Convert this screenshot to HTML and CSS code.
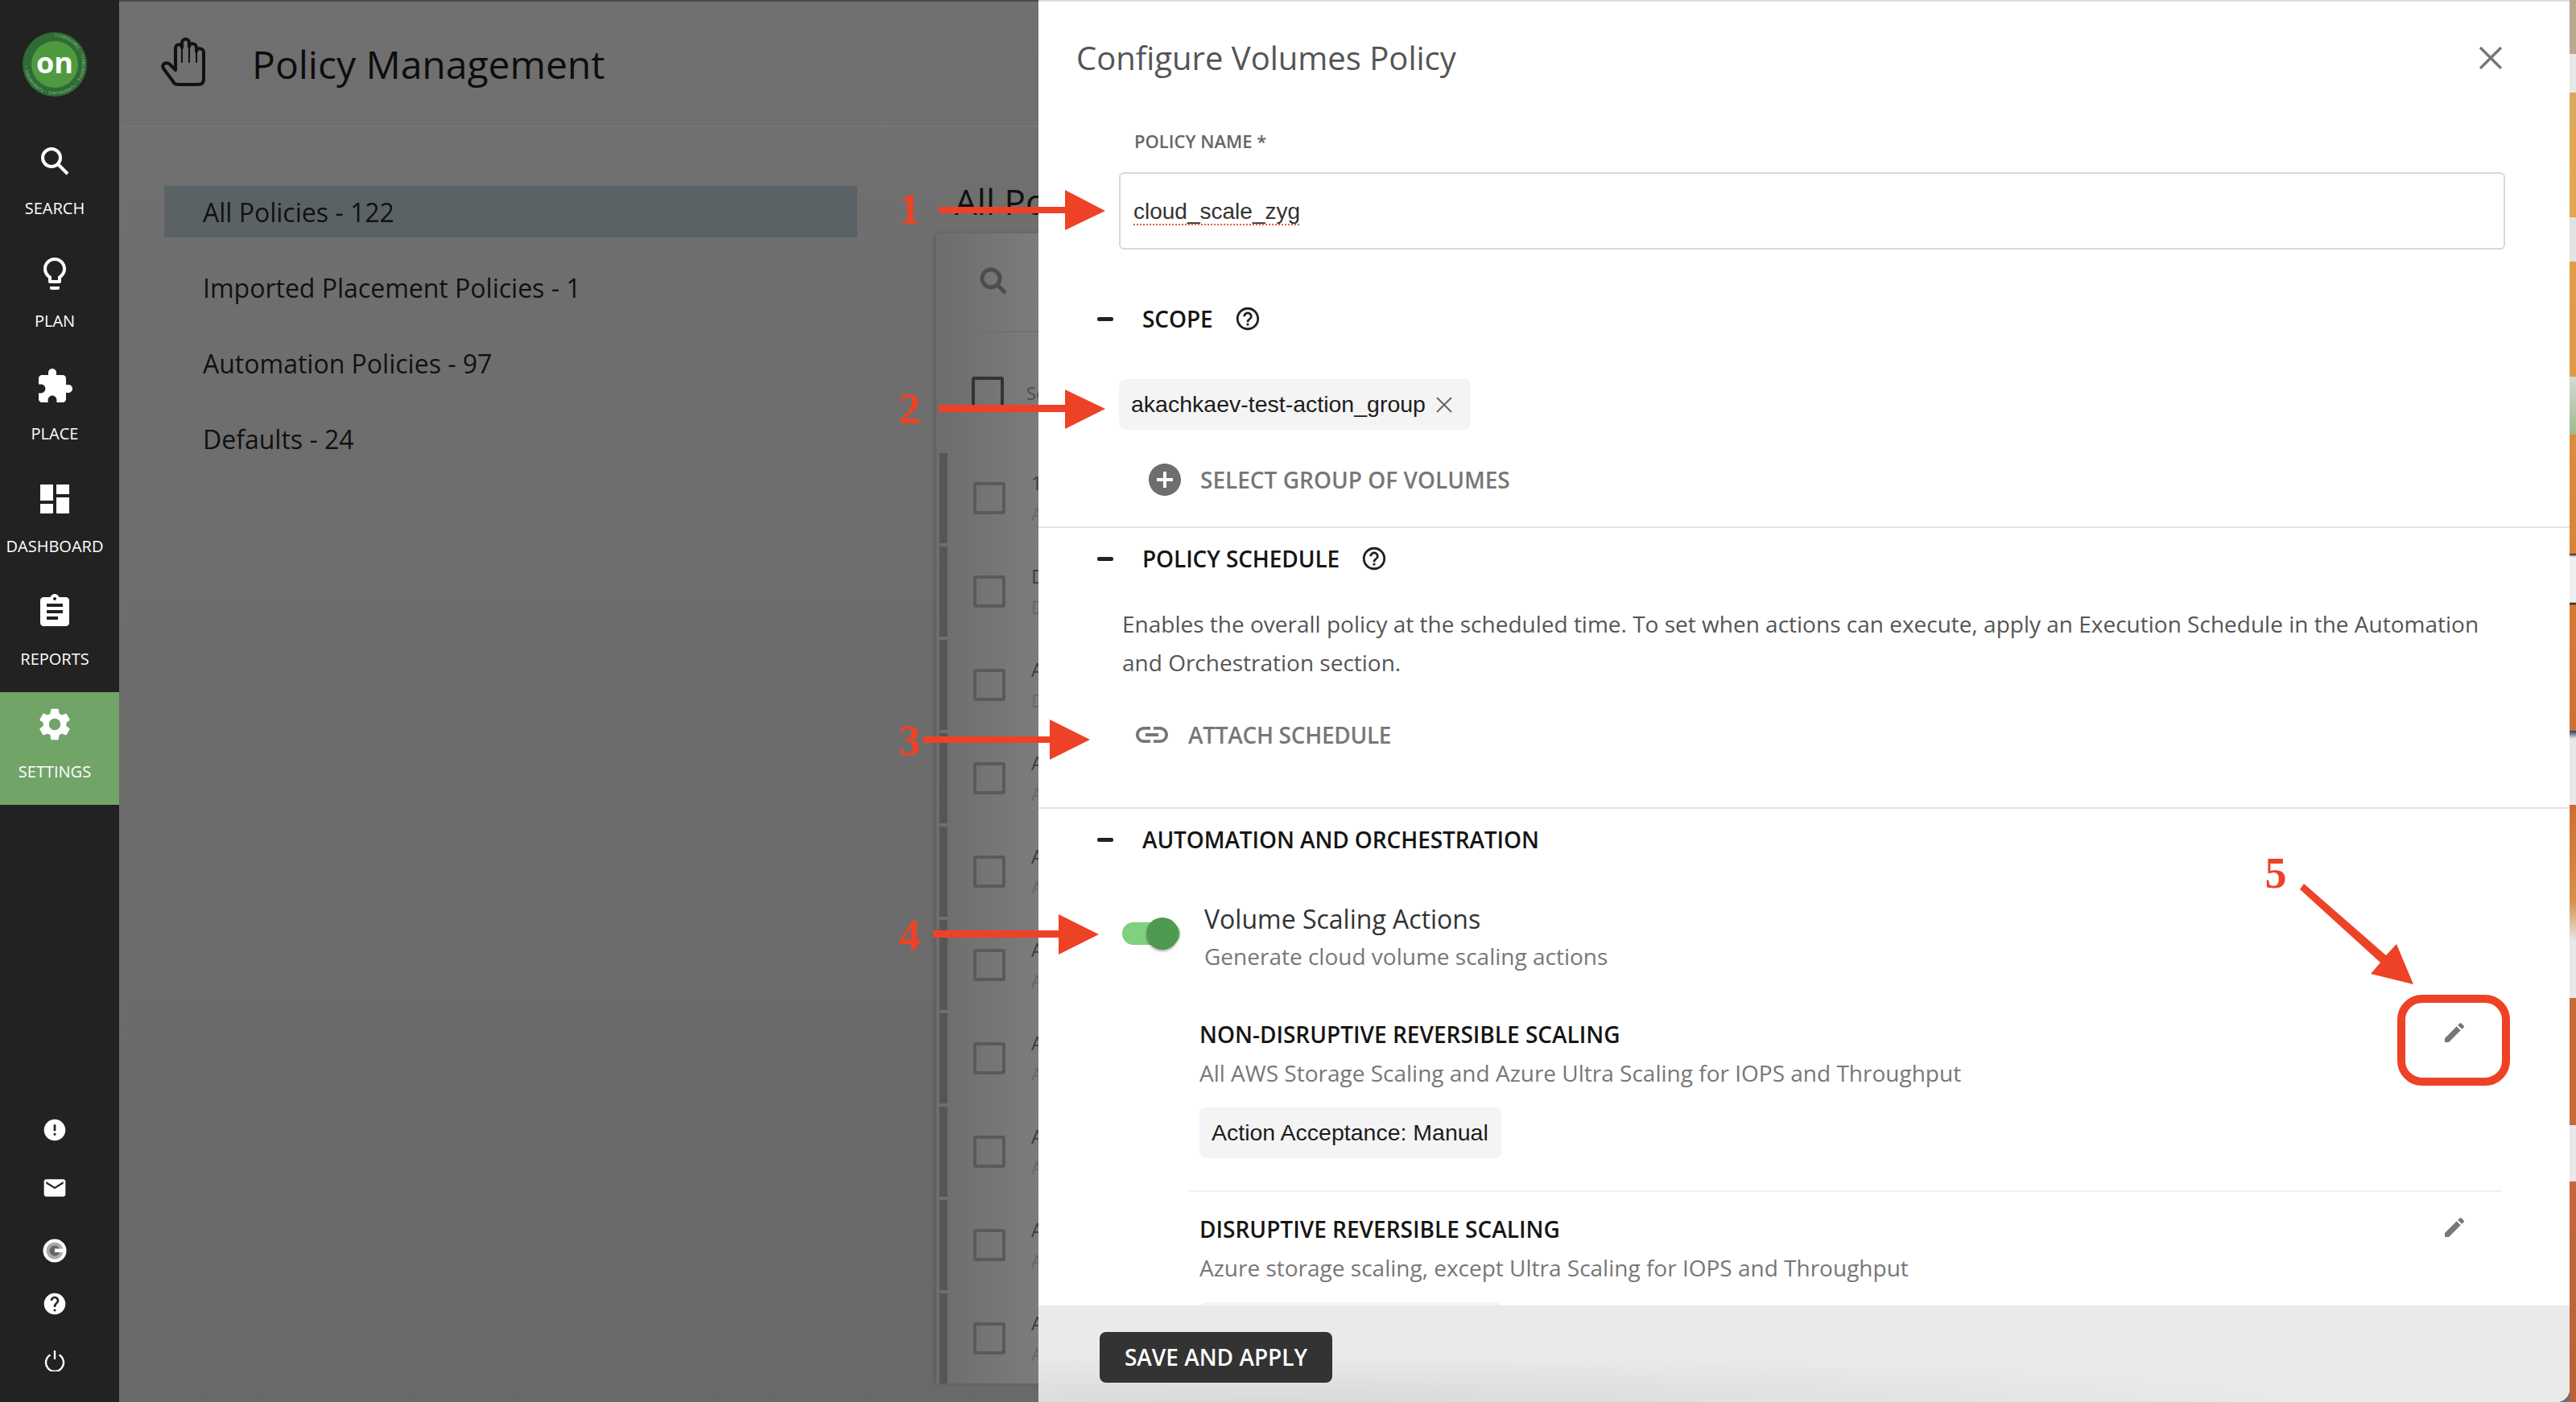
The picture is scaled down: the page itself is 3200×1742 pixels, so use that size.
FILE: index.html
```html
<!DOCTYPE html>
<html lang="en">
<head>
  <meta charset="UTF-8" />
  <title>Policy Management</title>
  <link rel="stylesheet" href="styles.css">
</head>
<body>
  <div class="app">

    <nav class="sidebar">
      <div class="logo">
        <svg viewBox="0 0 80 80" width="80" height="80">
          <defs><path id="ring" d="M40 6a34 34 0 1 1 -0.01 0"/></defs>
          <circle cx="40" cy="40" r="40" fill="#2f6b35"/>
          <circle cx="40" cy="40" r="29" fill="#4f9a3f"/>
          <text class="logo-ring"><textPath href="#ring">TURBONOMIC • TURBONOMIC • TURBONOMIC • TURBONOMIC •</textPath></text>
          <text class="logo-on" x="40" y="51" text-anchor="middle">on</text>
        </svg>
      </div>
      <a class="nav-item">
        <svg viewBox="0 0 36 36" width="36" height="36" fill="none" stroke="#fff"><circle cx="14" cy="14" r="11" stroke-width="4"/><path d="M22 22l12 12" stroke-width="4"/></svg>
        <span>SEARCH</span>
      </a>
      <a class="nav-item">
        <svg viewBox="0 0 24 24" width="48" height="48" fill="#fff"><path d="M9 21c0 .55.45 1 1 1h4c.55 0 1-.45 1-1v-1H9v1zm3-19C8.14 2 5 5.14 5 9c0 2.38 1.19 4.47 3 5.74V17c0 .55.45 1 1 1h6c.55 0 1-.45 1-1v-2.26c1.81-1.27 3-3.36 3-5.74 0-3.86-3.14-7-7-7zm2.85 11.1l-.85.6V16h-4v-2.3l-.85-.6C7.8 12.16 7 10.63 7 9c0-2.76 2.24-5 5-5s5 2.24 5 5c0 1.63-.8 3.16-2.15 4.1z"/></svg>
        <span>PLAN</span>
      </a>
      <a class="nav-item">
        <svg viewBox="0 0 24 24" width="48" height="48" fill="#fff"><path d="M20.5 11H19V7c0-1.1-.9-2-2-2h-4V3.5C13 2.12 11.88 1 10.5 1S8 2.12 8 3.5V5H4c-1.1 0-1.99.9-1.99 2v3.8H3.5c1.49 0 2.7 1.21 2.7 2.7s-1.21 2.7-2.7 2.7H2V20c0 1.1.9 2 2 2h3.8v-1.5c0-1.49 1.21-2.7 2.7-2.7 1.49 0 2.7 1.21 2.7 2.7V22H17c1.1 0 2-.9 2-2v-4h1.5c1.38 0 2.5-1.12 2.5-2.5S21.88 11 20.5 11z"/></svg>
        <span>PLACE</span>
      </a>
      <a class="nav-item">
        <svg viewBox="0 0 24 24" width="48" height="48" fill="#fff"><path d="M3 13h8V3H3v10zm0 8h8v-6H3v6zm10 0h8V11h-8v10zm0-18v6h8V3h-8z"/></svg>
        <span>DASHBOARD</span>
      </a>
      <a class="nav-item">
        <svg viewBox="0 0 24 24" width="48" height="48" fill="#fff"><path d="M19 3h-4.18C14.4 1.84 13.3 1 12 1c-1.3 0-2.4.84-2.82 2H5c-1.1 0-2 .9-2 2v14c0 1.1.9 2 2 2h14c1.1 0 2-.9 2-2V5c0-1.1-.9-2-2-2zm-7 0c.55 0 1 .45 1 1s-.45 1-1 1-1-.45-1-1 .45-1 1-1zm2 14H7v-2h7v2zm3-4H7v-2h10v2zm0-4H7V7h10v2z"/></svg>
        <span>REPORTS</span>
      </a>
      <a class="nav-item active">
        <svg viewBox="0 0 24 24" width="48" height="48" fill="#fff"><path d="M19.14 12.94c.04-.3.06-.61.06-.94 0-.32-.02-.64-.07-.94l2.03-1.58a.49.49 0 0 0 .12-.61l-1.92-3.32a.488.488 0 0 0-.59-.22l-2.39.96c-.5-.38-1.03-.7-1.62-.94l-.36-2.54a.484.484 0 0 0-.48-.41h-3.84c-.24 0-.43.17-.47.41l-.36 2.54c-.59.24-1.13.57-1.62.94l-2.39-.96c-.22-.08-.47 0-.59.22L2.74 8.87c-.12.21-.08.47.12.61l2.03 1.58c-.05.3-.09.63-.09.94s.02.64.07.94l-2.03 1.58a.49.49 0 0 0-.12.61l1.92 3.32c.12.22.37.29.59.22l2.39-.96c.5.38 1.03.7 1.62.94l.36 2.54c.05.24.24.41.48.41h3.84c.24 0 .44-.17.47-.41l.36-2.54c.59-.24 1.13-.56 1.62-.94l2.39.96c.22.08.47 0 .59-.22l1.92-3.32c.12-.22.07-.47-.12-.61l-2.01-1.58zM12 15.6c-1.98 0-3.6-1.62-3.6-3.6s1.62-3.6 3.6-3.6 3.6 1.62 3.6 3.6-1.62 3.6-3.6 3.6z"/></svg>
        <span>SETTINGS</span>
      </a>
      <div class="nav-bottom">
        <svg class="alert-icon" viewBox="0 0 24 24" width="32" height="32" fill="#fff"><path d="M12 2C6.48 2 2 6.48 2 12s4.48 10 10 10 10-4.48 10-10S17.52 2 12 2zm1 15h-2v-2h2v2zm0-4h-2V7h2v6z"/></svg>
        <svg class="mail-icon" viewBox="0 0 24 24" width="32" height="32" fill="#fff"><path d="M20 4H4c-1.1 0-2 .9-2 2v12c0 1.1.9 2 2 2h16c1.1 0 2-.9 2-2V6c0-1.1-.9-2-2-2zm0 4l-8 5-8-5V6l8 5 8-5v2z"/></svg>
        <svg class="g-icon" viewBox="0 0 30 30" width="30" height="30"><circle cx="15" cy="15" r="14.5" fill="#fff"/><circle cx="15" cy="15" r="10.5" fill="#aaa"/><circle cx="15" cy="15" r="6.5" fill="#666"/><path d="M15 12.5h14v4.5h-14z" fill="#fff"/></svg>
        <svg class="help-icon" viewBox="0 0 24 24" width="32" height="32" fill="#fff"><path d="M12 2C6.48 2 2 6.48 2 12s4.48 10 10 10 10-4.48 10-10S17.52 2 12 2zm1 17h-2v-2h2v2zm2.07-7.75l-.9.92C13.45 12.9 13 13.5 13 15h-2v-.5c0-1.1.45-2.1 1.17-2.83l1.24-1.26c.37-.36.59-.86.59-1.41 0-1.1-.9-2-2-2s-2 .9-2 2H8c0-2.21 1.79-4 4-4s4 1.79 4 4c0 .88-.36 1.68-.93 2.25z"/></svg>
        <svg class="power-icon" viewBox="0 0 26 26" width="26" height="26" fill="none" stroke="#fff" stroke-width="2.4"><path d="M7.5 5.5a11 11 0 1 0 11 0"/><path d="M13 0v11"/></svg>
      </div>
    </nav>

    <main class="main">
      <header class="main-header">
        <svg class="hand-icon" viewBox="0 0 60 64" width="60" height="64" fill="none" stroke="#111" stroke-width="4" stroke-linejoin="round"><path d="M17 58L3 39c-3-5 3-9 8-5l7 7V14c0-6 8-6 8-1V7c0-6 9-6 9 0v5c0-5 9-5 9 1v5c0-5 9-5 9 1v33c0 5-2 7-7 7H22c-2 0-4-.5-5-1z"/><path d="M26 13v19M35 12v20M44 18v14" stroke-width="2"/></svg>
        <h1>Policy Management</h1>
      </header>
      <div class="main-body">
        <ul class="policy-nav">
          <li class="selected">All Policies - 122</li>
          <li>Imported Placement Policies - 1</li>
          <li>Automation Policies - 97</li>
          <li>Defaults - 24</li>
        </ul>
        <section class="policies">
          <h2>All Policies</h2>
          <div class="card">
            <div class="card-search">
              <svg viewBox="0 0 36 36" width="36" height="36" fill="none" stroke="#4d4d4d" stroke-width="5"><circle cx="15" cy="15" r="11"/><path d="M23 23l10 10"/></svg>
            </div>
            <div class="card-head"><span class="check head-check"></span><span class="head-label">Select</span></div>
            <div class="row"><span class="bar"></span><span class="check"></span><div class="row-text"><b>100</b><i>AWS</i></div></div>
            <div class="row"><span class="bar"></span><span class="check"></span><div class="row-text"><b>Default</b><i>Default</i></div></div>
            <div class="row"><span class="bar"></span><span class="check"></span><div class="row-text"><b>AWS</b><i>Default</i></div></div>
            <div class="row"><span class="bar"></span><span class="check"></span><div class="row-text"><b>AWS</b><i>AWS</i></div></div>
            <div class="row"><span class="bar"></span><span class="check"></span><div class="row-text"><b>AWS</b><i>AWS</i></div></div>
            <div class="row"><span class="bar"></span><span class="check"></span><div class="row-text"><b>AWS</b><i>AWS</i></div></div>
            <div class="row"><span class="bar"></span><span class="check"></span><div class="row-text"><b>AWS</b><i>AWS</i></div></div>
            <div class="row"><span class="bar"></span><span class="check"></span><div class="row-text"><b>AWS</b><i>AWS</i></div></div>
            <div class="row"><span class="bar"></span><span class="check"></span><div class="row-text"><b>AWS</b><i>AWS</i></div></div>
            <div class="row"><span class="bar"></span><span class="check"></span><div class="row-text"><b>AWS</b><i>AWS</i></div></div>
          </div>
        </section>
      </div>
    </main>

    <aside class="panel">
      <div class="panel-head">
        <h2>Configure Volumes Policy</h2>
        <svg viewBox="0 0 28 28" width="28" height="28" stroke="#777" stroke-width="3.4"><path d="M1 1l26 26M27 1L1 27"/></svg>
      </div>
      <div class="panel-body">
        <div class="field">
          <label>POLICY NAME *</label>
          <div class="input"><span class="misspelled">cloud_scale_zyg</span></div>
        </div>

        <section class="block scope">
          <div class="block-head">
            <span class="dash"></span><h3>SCOPE</h3>
            <svg viewBox="0 0 24 24" width="34" height="34" fill="#222"><path d="M11 18h2v-2h-2v2zm1-16C6.48 2 2 6.48 2 12s4.48 10 10 10 10-4.48 10-10S17.52 2 12 2zm0 18c-4.41 0-8-3.59-8-8s3.59-8 8-8 8 3.59 8 8-3.59 8-8 8zm0-14c-2.21 0-4 1.79-4 4h2c0-1.1.9-2 2-2s2 .9 2 2c0 2-3 1.75-3 5h2c0-2.25 3-2.5 3-5 0-2.21-1.79-4-4-4z"/></svg>
          </div>
          <div class="chip scope-chip">akachkaev-test-action_group
            <svg viewBox="0 0 20 20" width="20" height="20" stroke="#666" stroke-width="2"><path d="M1 1l18 18M19 1L1 19"/></svg>
          </div>
          <div class="link-action select-group">
            <svg viewBox="0 0 24 24" width="48" height="48" fill="#6e6e6e"><path d="M12 2C6.48 2 2 6.48 2 12s4.48 10 10 10 10-4.48 10-10S17.52 2 12 2zm5 11h-4v4h-2v-4H7v-2h4V7h2v4h4v2z"/></svg>
            <span>SELECT GROUP OF VOLUMES</span>
          </div>
        </section>

        <section class="block schedule">
          <div class="block-head">
            <span class="dash"></span><h3>POLICY SCHEDULE</h3>
            <svg viewBox="0 0 24 24" width="34" height="34" fill="#222"><path d="M11 18h2v-2h-2v2zm1-16C6.48 2 2 6.48 2 12s4.48 10 10 10 10-4.48 10-10S17.52 2 12 2zm0 18c-4.41 0-8-3.59-8-8s3.59-8 8-8 8 3.59 8 8-3.59 8-8 8zm0-14c-2.21 0-4 1.79-4 4h2c0-1.1.9-2 2-2s2 .9 2 2c0 2-3 1.75-3 5h2c0-2.25 3-2.5 3-5 0-2.21-1.79-4-4-4z"/></svg>
          </div>
          <p class="desc">Enables the overall policy at the scheduled time. To set when actions can execute, apply an Execution Schedule in the Automation and Orchestration section.</p>
          <div class="link-action attach">
            <svg viewBox="0 0 24 24" width="48" height="48" fill="#777"><path d="M3.9 12c0-1.71 1.39-3.1 3.1-3.1h4V7H7c-2.76 0-5 2.24-5 5s2.24 5 5 5h4v-1.9H7c-1.71 0-3.1-1.39-3.1-3.1zM8 13h8v-2H8v2zm9-6h-4v1.9h4c1.71 0 3.1 1.39 3.1 3.1s-1.39 3.1-3.1 3.1h-4V17h4c2.76 0 5-2.24 5-5s-2.24-5-5-5z"/></svg>
            <span>ATTACH SCHEDULE</span>
          </div>
        </section>

        <section class="block automation">
          <div class="block-head">
            <span class="dash"></span><h3>AUTOMATION AND ORCHESTRATION</h3>
          </div>
          <div class="toggle-row">
            <span class="toggle"><span class="knob"></span></span>
            <div>
              <div class="toggle-title">Volume Scaling Actions</div>
              <div class="toggle-sub">Generate cloud volume scaling actions</div>
            </div>
          </div>
          <div class="scaling first">
            <div class="scaling-text">
              <h4>NON-DISRUPTIVE REVERSIBLE SCALING</h4>
              <p>All AWS Storage Scaling and Azure Ultra Scaling for IOPS and Throughput</p>
              <div class="chip">Action Acceptance: Manual</div>
            </div>
            <svg class="edit" viewBox="0 0 24 24" width="32" height="32" fill="#777"><path d="M3 17.25V21h3.75L17.81 9.94l-3.75-3.75L3 17.25zM20.71 7.04c.39-.39.39-1.02 0-1.41l-2.34-2.34a.996.996 0 0 0-1.41 0l-1.83 1.83 3.75 3.75 1.83-1.83z"/></svg>
          </div>
          <div class="scaling">
            <div class="scaling-text">
              <h4>DISRUPTIVE REVERSIBLE SCALING</h4>
              <p>Azure storage scaling, except Ultra Scaling for IOPS and Throughput</p>
              <div class="chip">Action Acceptance: Manual</div>
            </div>
            <svg class="edit" viewBox="0 0 24 24" width="32" height="32" fill="#777"><path d="M3 17.25V21h3.75L17.81 9.94l-3.75-3.75L3 17.25zM20.71 7.04c.39-.39.39-1.02 0-1.41l-2.34-2.34a.996.996 0 0 0-1.41 0l-1.83 1.83 3.75 3.75 1.83-1.83z"/></svg>
          </div>
        </section>
      </div>
      <footer class="panel-foot">
        <button>SAVE AND APPLY</button>
      </footer>
    </aside>

    <div class="desktop-strip"></div>
  </div>

  <!-- callouts drawn on top of the screenshot -->
  <svg class="callouts" viewBox="0 0 3200 1742" width="3200" height="1742">
    <g fill="#ee4226">
      <path d="M1166 257h157v-21l50 26-50 24v-21h-157z"/>
      <path d="M1166 503h157v-19l50 24-50 25v-21h-157z"/>
      <path d="M1147 915h157v-21l50 25-50 25v-21h-157z"/>
      <path d="M1159 1156h156v-20l50 25-50 25v-21h-156z"/>
      <path d="M2857 1105l5-7 102 89 13-14 21 50-53-13 12-14z"/>
      <text class="callout-num" x="1130" y="278">1</text>
      <text class="callout-num" x="1130" y="526">2</text>
      <text class="callout-num" x="1130" y="938">3</text>
      <text class="callout-num" x="1130" y="1180">4</text>
      <text class="callout-num" x="2827" y="1103">5</text>
    </g>
    <rect x="2983" y="1241" width="130" height="103" rx="26" fill="none" stroke="#ee4226" stroke-width="10"/>
  </svg>
</body>
</html>
```

FILE: styles.css
```css
* {
  box-sizing: border-box;
}
body {
  margin: 0;
  font-family: "Open Sans", sans-serif;
  background: #6e6e6e;
  overflow: hidden;
}
h1, h2, h3, h4, p, ul {
  margin: 0;
  padding: 0;
  font-weight: normal;
}
.app {
  display: flex;
  width: 3200px;
  height: 1742px;
}

/* left nav */
.sidebar {
  flex: none;
  width: 148px;
  background: #222;
  color: #fff;
  display: flex;
  flex-direction: column;
}
.logo {
  height: 160px;
  padding: 40px 0 0 28px;
}
.logo-ring {
  font-size: 4.6px;
  fill: #a5cfa0;
  letter-spacing: 0.4px;
}
.logo-on {
  font-size: 36px;
  font-weight: 700;
  fill: #fff;
}
.nav-item {
  height: 140px;
  padding-right: 12px;
  display: flex;
  flex-direction: column;
  align-items: center;
  font-size: 20px;
  line-height: 28px;
}
.nav-item svg {
  margin-top: 16px;
  height: 48px;
}
.nav-item span {
  margin-top: 21px;
}
.nav-item:first-of-type svg {
  margin-top: 22px;
  height: 36px;
}
.nav-item:first-of-type span {
  margin-top: 27px;
}
.nav-item.active {
  background: #71a568;
}
.nav-bottom {
  margin-top: 388px;
  padding-right: 12px;
  display: flex;
  flex-direction: column;
  align-items: center;
}
.mail-icon {
  margin-top: 40px;
}
.g-icon {
  margin-top: 47px;
}
.help-icon {
  margin-top: 35px;
}
.power-icon {
  margin-top: 42px;
}

/* page behind the panel */
.main {
  flex: none;
  width: 1142px;
  overflow: hidden;
  background: linear-gradient(#707070, #696969);
  border-top: 2px solid #4a4a4a;
}
.main-header {
  height: 156px;
  margin-left: 4px;
  padding-left: 48px;
  display: flex;
  align-items: center;
  border-bottom: 2px solid #777;
}
.hand-icon {
  margin-top: -2px;
}
.main-header h1 {
  margin-left: 53px;
  margin-top: 1px;
  font-size: 48px;
  color: #0d0d0d;
}
.main-body {
  display: flex;
  padding: 73px 0 0 56px;
}
.policy-nav {
  flex: none;
  width: 861px;
  list-style: none;
  font-size: 32px;
  color: #111;
}
.policy-nav li {
  height: 64px;
  line-height: 66px;
  padding-left: 48px;
  margin-bottom: 30px;
  white-space: nowrap;
}
.policy-nav .selected {
  background: #5a6266;
}
.policies {
  flex: none;
  width: 1000px;
  margin-left: 98px;
}
.policies h2 {
  margin-left: 23px;
  height: 38px;
  font-size: 44px;
  line-height: 38px;
  color: #111;
}
.card {
  margin-top: 21px;
  background: linear-gradient(90deg, #6d6d6d, #7c7c7c 130px);
  box-shadow: -2px 0 6px rgba(0,0,0,0.15);
}
.card-search {
  height: 123px;
  padding: 41px 0 0 53px;
  border-bottom: 2px solid #707070;
}
.card-head {
  height: 150px;
  padding: 55px 0 0 44px;
  display: flex;
}
.check {
  flex: none;
  width: 40px;
  height: 40px;
  border: 4px solid #5a5a5a;
  border-radius: 3px;
}
.head-check {
  border-color: #333;
}
.head-label {
  margin-left: 28px;
  font-size: 22px;
  line-height: 40px;
  color: #4d4d4d;
}
.row {
  height: 112px;
  margin: 0 0 4px 4px;
  display: flex;
  align-items: center;
}
.bar {
  flex: none;
  width: 10px;
  height: 112px;
  background: #565656;
  margin-right: 32px;
}
.row-text {
  margin-left: 32px;
  display: flex;
  flex-direction: column;
  gap: 8px;
}
.row-text b {
  font-weight: normal;
  font-size: 24px;
  line-height: 30px;
  color: #3c3c3c;
}
.row-text i {
  font-style: normal;
  font-size: 22px;
  line-height: 30px;
  color: #666;
}

/* side panel */
.panel {
  flex: none;
  width: 1902px;
  background: #fff;
  border-top: 2px solid #ddd;
  display: flex;
  flex-direction: column;
  border-bottom-right-radius: 16px;
  overflow: hidden;
}
.panel-head {
  flex: none;
  height: 140px;
  padding: 0 84px 0 47px;
  display: flex;
  justify-content: space-between;
  align-items: center;
  color: #555;
}
.panel-head h2 {
  margin-top: -2px;
  font-size: 40px;
}
.panel-body {
  flex: 1;
  overflow: hidden;
}
.panel-foot {
  flex: none;
  height: 120px;
  padding: 33px 0 0 76px;
  background: radial-gradient(ellipse 70% 60px at 15% 100%, #d9d9d9, transparent), #eaeaea;
}
.panel-foot button {
  width: 289px;
  height: 63px;
  padding-bottom: 3px;
  border: none;
  border-radius: 8px;
  background: #333;
  color: #fff;
  font-family: "Open Sans", sans-serif;
  font-size: 28px;
  font-weight: 600;
}
.field {
  padding: 18px 80px 0 100px;
}
.field label {
  display: block;
  margin-left: 19px;
  font-size: 22px;
  line-height: 30px;
  font-weight: 600;
  color: #666;
}
.input {
  margin-top: 24px;
  height: 96px;
  padding-left: 16px;
  border: 2px solid #d8d8d8;
  border-radius: 6px;
  font-family: "Liberation Sans", sans-serif;
  font-size: 28px;
  line-height: 94px;
  color: #333;
}
.misspelled {
  text-decoration: underline dotted #e8574a 2px;
  text-underline-offset: 6px;
}
.block {
  padding-top: 18px;
  border-bottom: 2px solid #e4e4e4;
}
.scope {
  margin-top: 48px;
  padding-bottom: 38px;
}
.schedule {
  padding-bottom: 70px;
}
.automation {
  border-bottom: none;
}
.block-head {
  height: 40px;
  padding-left: 73px;
  display: flex;
  align-items: center;
}
.dash {
  width: 20px;
  height: 5px;
  border-radius: 2px;
  background: #222;
  margin-right: 36px;
}
.block-head h3 {
  font-size: 28px;
  font-weight: 600;
  letter-spacing: -0.1px;
  color: #151515;
  margin-right: 26px;
}
.chip {
  display: inline-flex;
  align-items: center;
  height: 63px;
  padding: 0 16px 0 15px;
  border-radius: 8px;
  background: #f4f4f4;
  font-family: "Liberation Sans", sans-serif;
  font-size: 28.5px;
  color: #1c1c1c;
}
.scope-chip {
  display: flex;
  width: 437px;
  margin: 55px 0 0 100px;
  padding: 0 14px 0 15px;
  gap: 13px;
  white-space: nowrap;
}
.link-action {
  height: 40px;
  display: flex;
  align-items: center;
  font-size: 28px;
  font-weight: 600;
  color: #777;
}
.select-group {
  margin: 42px 0 0 133px;
  gap: 20px;
}
.attach {
  margin: 46px 0 0 117px;
  gap: 21px;
  letter-spacing: -0.3px;
}
.desc {
  margin: 37px 84px 1px 104px;
  font-size: 28px;
  line-height: 48px;
  color: #555;
}
.toggle-row {
  margin: 54px 0 0 104px;
  display: flex;
  gap: 30px;
}
.toggle {
  position: relative;
  flex: none;
  width: 72px;
  height: 28px;
  margin-top: 29px;
  border-radius: 14px;
  background: #7fd07f;
}
.knob {
  position: absolute;
  top: -6px;
  right: 2px;
  width: 40px;
  height: 40px;
  border-radius: 50%;
  background: #4f9a50;
  box-shadow: 0 2px 3px rgba(0,0,0,0.3);
}
.toggle-title {
  font-size: 32px;
  line-height: 50px;
  color: #333;
}
.toggle-sub {
  margin-top: 1px;
  font-size: 28px;
  line-height: 40px;
  color: #777;
}
.scaling {
  margin: 0 84px 0 186px;
  padding: 26px 43px 0 14px;
  display: flex;
  justify-content: space-between;
  align-items: flex-start;
}
.scaling.first {
  margin-top: 57px;
  padding-top: 0;
  padding-bottom: 40px;
  border-bottom: 2px solid #f2f2f2;
}
.scaling h4 {
  font-size: 28px;
  line-height: 40px;
  font-weight: 600;
  color: #151515;
}
.scaling p {
  margin: 8px 0 23px;
  font-size: 28px;
  line-height: 40px;
  color: #777;
}
.edit {
  margin-top: 2px;
}

/* bit of desktop showing on the right edge */
.desktop-strip {
  flex: none;
  width: 8px;
  background: linear-gradient(#b9a88e 0, #b9a88e 67px, #e8e8e8 67px, #e8e8e8 115px,
    #dda858 115px, #e3a552 270px, #e2e2e2 270px, #e2e2e2 325px,
    #e39c47 325px, #e19843 468px, #d8d8d8 468px, #9db98f 540px,
    #dd8c3c 540px, #d98336 688px, #111 688px, #f0f0f0 692px, #f0f0f0 748px, #111 750px,
    #d77a35 752px, #cf6f35 908px, #2a3a5a 908px, #e8e8e8 918px, #e8e8e8 1000px,
    #cf6d33 1000px, #d78f48 1120px, #e8e8e8 1170px, #e8e8e8 1240px,
    #c8693a 1240px, #c8693a 1398px, #e8e8e8 1398px, #e8e8e8 1468px,
    #c5683a 1468px, #b8613a 1742px);
}

.callouts {
  position: absolute;
  top: 0;
  left: 0;
  pointer-events: none;
}
.callout-num {
  font-family: "Liberation Serif", serif;
  font-weight: 700;
  font-size: 54px;
  text-anchor: middle;
}
```
